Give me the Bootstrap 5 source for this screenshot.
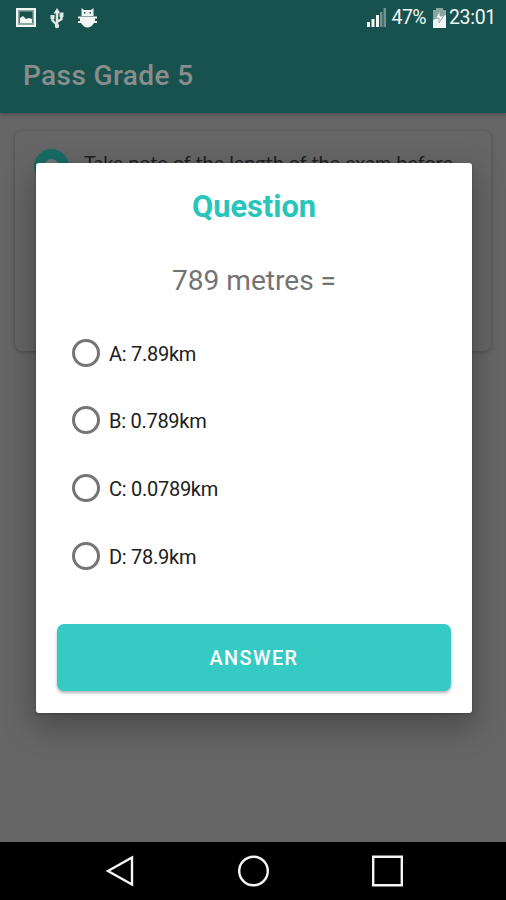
<!DOCTYPE html>
<html lang="en">
<head>
<meta charset="utf-8">
<meta name="viewport" content="width=device-width, initial-scale=1">
<title>Pass Grade 5</title>
<link rel="stylesheet" href="https://cdn.jsdelivr.net/npm/bootstrap@5.3.0/dist/css/bootstrap.min.css">
<style>
body { font-family: Roboto, "Noto Sans", sans-serif; background: #666; }
.screen { width: 506px; height: 900px; }
.app-bar { height: 113px; background: #18524e; box-shadow: 0 1px 5px rgba(50,30,50,.5); }
.status { height: 38px; padding: 0 10px 2px 15px; color: #f1f6f5; font-size: 19.500px; line-height: 1; }
.usb-icon { margin-left: 10px; }
.debug-icon { margin-left: 9px; }
.battery-label { margin-left: 5px; letter-spacing: -.6px; }
.battery-icon { margin: 0 2px 0 6px; }
.clock { letter-spacing: -.3px; }
.app-title { font-size: 28px; font-weight: 500; letter-spacing: .4px; color: #898e8d; padding: 15px 23px 0; line-height: 46px; }
.tip-card { margin: 18px 15px 0; height: 220px; padding: 18px 19px; border-radius: 7px; background: #666; box-shadow: 0 1px 4px rgba(0,0,0,.28); }
.tip-icon { width: 35px; height: 35px; border: 10px solid #176c65; background: #737676; }
.tip-text { font-family: Lato, sans-serif; font-size: 19.800px; line-height: 27px; color: #202020; margin-left: 15px; white-space: nowrap; }
.dialog-wrap { top: 163px; left: 36px; width: 436px; height: 550px; }
.dialog-panel { border-radius: 3px; box-shadow: 0 12px 30px 3px rgba(0,0,0,.28), 0 1px 3px rgba(0,0,0,.25); padding: 0 21px 22px; }
.dialog-title { font-size: 30.800px; font-weight: 700; line-height: 36px; margin-top: 26px; color: #27c5bc; }
.prompt { font-size: 28.100px; line-height: 36px; margin-top: 38px; color: #737373; }
.choices { margin-top: 20px; padding-left: 15px; }
.choice { height: 67.600px; font-size: 20px; letter-spacing: -.27px; color: #202020; line-height: 24px; }
.choice span { padding-top: 2px; }
.choice .form-check-input { width: 28px; height: 28px; border: 3px solid #757575; background-color: #fff; margin: 0 9px 0 0; }
.answer { height: 67px; border-radius: 7px; background: #36cac4; color: #fff; font-size: 19.800px; font-weight: 500; letter-spacing: 1.500px; padding-top: 9px; box-shadow: 0 2px 3px rgba(0,0,0,.3); }
.answer:hover { background: #2fbdb7; color: #fff; }
.softkeys { height: 58px; }
</style>
</head>
<body>
<div class="screen position-relative overflow-hidden d-flex flex-column">
  <header class="app-bar flex-shrink-0">
    <div class="status d-flex align-items-center">
      <svg width="22" height="22" viewBox="0 0 22 22"><path fill="#f1f6f5" fill-rule="evenodd" d="M1 1H21V20H1ZM3.500 3.500V17.500H18.500V3.500Z"/><path fill="#8fa5a2" fill-rule="evenodd" d="M3 3H19V18H3ZM4.500 4.500V16H17.500V4.500Z"/><path fill="#f1f6f5" d="M5 16V11L8 9L11 12L14 11L17 12V16Z"/></svg>
      <svg class="usb-icon" width="20" height="22" viewBox="2 0 20 22" fill="none" stroke="#dce8e6" stroke-width="2.400"><path d="M12 4V20M12 18L7.500 13.500V10M12 15L16.500 12V8"/><path fill="#dce8e6" stroke="none" d="M12 1L8.500 6.500H15.500ZM5.500 8H9.500V12H5.500ZM14.500 5.500H18.500V10H14.500Z"/><circle cx="12" cy="19" r="2.200" fill="#dce8e6" stroke="none"/></svg>
      <svg class="debug-icon" width="24" height="22" viewBox="0 0 24 22" fill="#f1f6f5"><path fill-rule="evenodd" d="M5.500 1L8 3H15L17.500 1V9H5.500ZM8 5V6.500H9.500V5ZM13.500 5V6.500H15V5Z"/><path d="M2 9.500H21V11.500H19V14H21V16H18C16 19 14 20.500 11.500 20.500S7 19 5 16H2V14H4V11.500H2Z"/></svg>
      <svg class="ms-auto" width="21" height="22" viewBox="0 0 21 22"><path fill="#f1f6f5" d="M1 15H4V20H1ZM5.500 12H8.500V20H5.500ZM10 8H13V20H10Z"/><path fill="#6f9390" d="M14 5H16.500V20H14ZM17.500 1H20V20H17.500Z"/></svg>
      <span class="battery-label">47%</span>
      <svg class="battery-icon" width="15" height="21" viewBox="0 0 15 21"><path fill="#8aa5a2" d="M4 0H11V2H14V12H1V2H4Z"/><path fill="#f1f6f5" d="M1 12L14 7V20H1Z"/><path fill="#f1f6f5" stroke="#879e9c" stroke-width=".8" d="M8 3L3.500 10H7V15L11.500 8H8Z"/></svg>
      <span class="clock">23:01</span>
    </div>
    <div class="app-title">Pass Grade 5</div>
  </header>
  <main class="flex-grow-1">
    <section class="tip-card d-flex align-items-start">
      <div class="tip-icon rounded-circle flex-shrink-0"></div>
      <div class="tip-text">Take note of the length of the exam before</div>
    </section>
  </main>
  <nav class="softkeys bg-black flex-shrink-0">
    <svg width="506" height="58" viewBox="0 0 506 58" fill="none" stroke="#f5f5f5" stroke-width="2.400"><path d="M132 15.500V42.500L108 29Z"/><circle cx="253.500" cy="29" r="14.300"/><path d="M373.200 14.800H401.800V43.200H373.200Z"/></svg>
  </nav>
  <div class="dialog-wrap position-absolute" role="dialog" aria-labelledby="question-title">
    <div class="dialog-panel bg-white h-100 d-flex flex-column">
      <h1 class="dialog-title text-center mb-0" id="question-title">Question</h1>
      <p class="prompt text-center mb-0">789 metres =</p>
      <form class="choices">
        <label class="choice d-flex align-items-center"><input class="form-check-input flex-shrink-0" type="radio" name="answer"><span>A: 7.89km</span></label>
        <label class="choice d-flex align-items-center"><input class="form-check-input flex-shrink-0" type="radio" name="answer"><span>B: 0.789km</span></label>
        <label class="choice d-flex align-items-center"><input class="form-check-input flex-shrink-0" type="radio" name="answer"><span>C: 0.0789km</span></label>
        <label class="choice d-flex align-items-center"><input class="form-check-input flex-shrink-0" type="radio" name="answer"><span>D: 78.9km</span></label>
      </form>
      <button class="answer btn border-0 w-100 mt-auto" type="button">ANSWER</button>
    </div>
  </div>
</div>
<script src="https://cdn.jsdelivr.net/npm/bootstrap@5.3.0/dist/js/bootstrap.bundle.min.js"></script>
</body>
</html>
